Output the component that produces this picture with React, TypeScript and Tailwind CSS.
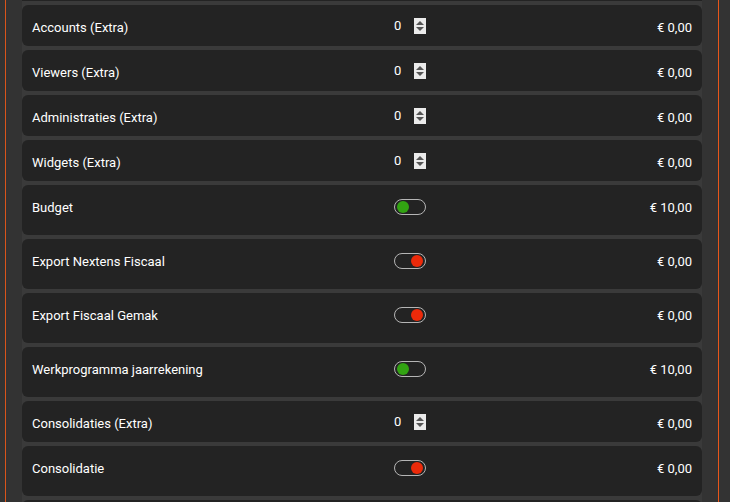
type Row =
  | { label: string; kind: "number"; value: number; price: string }
  | { label: string; kind: "toggle"; on: boolean; price: string };

const rows: Row[] = [
  { label: "Accounts (Extra)", kind: "number", value: 0, price: "€ 0,00" },
  { label: "Viewers (Extra)", kind: "number", value: 0, price: "€ 0,00" },
  { label: "Administraties (Extra)", kind: "number", value: 0, price: "€ 0,00" },
  { label: "Widgets (Extra)", kind: "number", value: 0, price: "€ 0,00" },
  { label: "Budget", kind: "toggle", on: true, price: "€ 10,00" },
  { label: "Export Nextens Fiscaal", kind: "toggle", on: false, price: "€ 0,00" },
  { label: "Export Fiscaal Gemak", kind: "toggle", on: false, price: "€ 0,00" },
  { label: "Werkprogramma jaarrekening", kind: "toggle", on: true, price: "€ 10,00" },
  { label: "Consolidaties (Extra)", kind: "number", value: 0, price: "€ 0,00" },
  { label: "Consolidatie", kind: "toggle", on: false, price: "€ 0,00" },
];

function Spinner() {
  return (
    <div className="flex flex-col items-center justify-center w-[12px] h-[16px] bg-[#ebebeb] gap-[2px]">
      <svg width="8" height="4" viewBox="0 0 8 4">
        <path d="M0 4 L4 0 L8 4 Z" fill="#555" />
      </svg>
      <svg width="8" height="4" viewBox="0 0 8 4">
        <path d="M0 0 L4 4 L8 0 Z" fill="#555" />
      </svg>
    </div>
  );
}

function Toggle({ on }: { on: boolean }) {
  return (
    <div
      className={`flex items-center w-[32px] h-[16px] rounded-full border border-[#b5b5b5] px-[2px] ${
        on ? "justify-start" : "justify-end"
      }`}
    >
      <div
        className={`w-[12px] h-[12px] rounded-full ${on ? "bg-[#32a312]" : "bg-[#ec2a0a]"}`}
      />
    </div>
  );
}

export default function App() {
  return (
    <div
      className="flex w-[730px] h-[502px] overflow-hidden bg-[#333333] text-white text-[13px]"
      style={{ fontFamily: "Roboto, 'Liberation Sans', sans-serif" }}
    >
      <div className="w-[22px] shrink-0 flex">
        <div className="ml-[5px] w-[1px] bg-[#d9541b]" />
      </div>
      <div className="w-[680px] shrink-0 flex flex-col gap-[4px] bg-[#3a3a3a]">
        <div className="h-[1px] shrink-0 bg-[#232323]" />
        {rows.map((r, i) => (
          <div
            key={i}
            className={`shrink-0 flex items-start rounded-md bg-[#232323] px-[10px] pt-[15px] ${
              r.kind === "number" ? "h-[41px]" : "h-[50px]"
            }`}
          >
            <div className="w-[362px] leading-[16px]">{r.label}</div>
            <div className="h-[16px] flex items-center">
              {r.kind === "number" ? (
                <div className="flex items-center gap-[13px] -mt-[4px]">
                  <span className="leading-[16px]">{r.value}</span>
                  <Spinner />
                </div>
              ) : (
                <div className="-mt-[2px]">
                  <Toggle on={r.on} />
                </div>
              )}
            </div>
            <div className="flex-1 text-right leading-[16px]">{r.price}</div>
          </div>
        ))}
        <div className="h-[20px] shrink-0 rounded-md bg-[#232323]" />
      </div>
      <div className="w-[16px] shrink-0" />
      <div className="w-[1px] shrink-0 bg-[#e8561a]" />
    </div>
  );
}
